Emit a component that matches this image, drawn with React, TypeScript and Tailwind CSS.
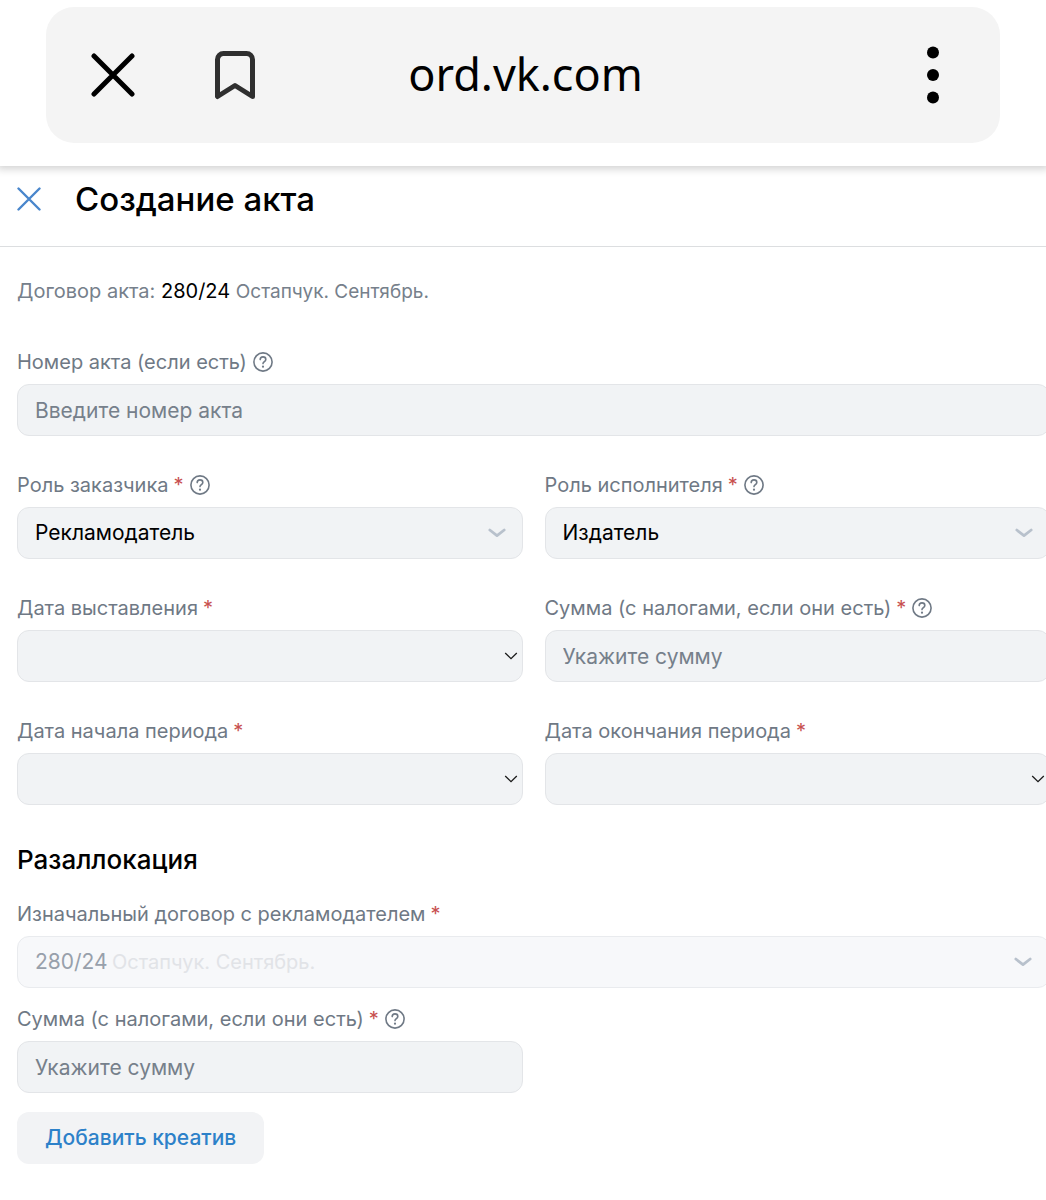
import type { ReactNode } from "react";

interface LabelProps {
    htmlFor: string;
    text: string;
    required?: boolean;
    help?: boolean;
}

const controlClass =
    "h-13 w-full rounded-xl border border-[#e3e5e8] bg-[#f1f3f5] px-[17px] text-[21px] text-black outline-none placeholder:text-[#76808b] placeholder:opacity-100";

function HelpIcon() {
    return (
        <svg width="20" height="20" viewBox="0 0 20 20" fill="none" stroke="currentColor" strokeWidth="1.6" strokeLinecap="round" strokeLinejoin="round">
            <circle cx="10" cy="10" r="9.1" />
            <path d="M7.2 7.6C7.2 5.9 8.4 4.9 10 4.9s2.8 1 2.8 2.5c0 2.1-2.8 2.2-2.8 4.2" />
            <circle cx="10" cy="14.7" r="1.1" fill="currentColor" stroke="none" />
        </svg>
    );
}

function Chevron() {
    return (
        <svg className="pointer-events-none" width="18" height="10" viewBox="0 0 18 10" fill="none" stroke="#b8c1cc" strokeWidth="2.8" strokeLinecap="round" strokeLinejoin="round">
            <path d="M1.8 2 9 7.6 16.2 2" />
        </svg>
    );
}

function ThinChevron() {
    return (
        <svg className="pointer-events-none" width="14" height="8" viewBox="0 0 14 8" fill="none" stroke="#1a1a1a" strokeWidth="1.3">
            <path d="M1.2 1 7 6.6 12.8 1" />
        </svg>
    );
}

function FieldLabel({ htmlFor, text, required, help }: LabelProps) {
    return (
        <div className="flex items-center gap-[6px] leading-6 text-[#6f7985]">
            <label htmlFor={htmlFor} className="whitespace-nowrap text-[20px]">
                {text}
                {required && <span className="ml-[5px] text-[#c8504f]">*</span>}
            </label>
            {help && (
                <button type="button" aria-label="Подсказка">
                    <HelpIcon />
                </button>
            )}
        </div>
    );
}

function Field({ children, ...label }: LabelProps & { children: ReactNode }) {
    return (
        <div className="flex min-w-0 flex-col gap-[10px]">
            <FieldLabel {...label} />
            {children}
        </div>
    );
}

function RoleSelect({ id, value }: { id: string; value: string }) {
    return (
        <div className="relative flex items-center">
            <select id={id} className={`${controlClass} appearance-none`}>
                <option>{value}</option>
            </select>
            <div className="pointer-events-none absolute right-[17px]">
                <Chevron />
            </div>
        </div>
    );
}

function DateSelect({ id }: { id: string }) {
    return (
        <div className="relative flex items-center">
            <select id={id} className={`${controlClass} appearance-none`}>
                <option></option>
            </select>
            <div className="pointer-events-none absolute right-[5px]">
                <ThinChevron />
            </div>
        </div>
    );
}

function BrowserBar() {
    return (
        <header className="relative bg-white px-[46px] pt-[7px] pb-[23px] shadow-[0_0_8px_3px_rgba(0,0,0,0.18)]">
            <div className="flex h-34 items-center rounded-[28px] bg-[#f4f4f4] px-[45px]">
                <button type="button" aria-label="Закрыть">
                    <svg width="44" height="44" viewBox="0 0 44 44" fill="none" stroke="#000" strokeWidth="5" strokeLinecap="round">
                        <path d="M3 3 41 41M41 3 3 41" />
                    </svg>
                </button>
                <button type="button" aria-label="Закладка" className="ml-[79px]">
                    <svg width="42" height="50" viewBox="0 0 42 50" fill="none" stroke="#2f2f2f" strokeWidth="5" strokeLinejoin="round">
                        <path d="M3.5 46.5V9.5a6 6 0 0 1 6-6h23a6 6 0 0 1 6 6v37L21 35.5Z" />
                    </svg>
                </button>
                <span className="flex-1 pb-1 text-center font-['Noto_Sans',sans-serif] text-[45px] leading-none text-black">ord.vk.com</span>
                <button type="button" aria-label="Меню" className="mr-[16px] ml-[132px]">
                    <svg width="12" height="58" viewBox="0 0 12 58">
                        <circle cx="6" cy="6.5" r="6" />
                        <circle cx="6" cy="29" r="6" />
                        <circle cx="6" cy="51.5" r="6" />
                    </svg>
                </button>
            </div>
        </header>
    );
}

export default function App() {
    return (
        <div className="min-h-screen overflow-hidden bg-white font-['Inter',sans-serif]">
            <BrowserBar />
            <div className="flex h-[81px] items-center gap-[34px] border-b border-[#dcdee0] px-[17px] pb-[15px]">
                <button type="button" aria-label="Закрыть форму">
                    <svg width="24" height="24" viewBox="0 0 24 24" fill="none" stroke="#4986cc" strokeWidth="2.4" strokeLinecap="round">
                        <path d="M1.5 1.5 22.5 22.5M22.5 1.5 1.5 22.5" />
                    </svg>
                </button>
                <h1 className="text-[33px] leading-10 font-medium text-black">Создание акта</h1>
            </div>

            <main className="-mr-1 pt-[30px] pl-[17px]">
                <p className="text-[20px] leading-7 text-[#76808b]">
                    Договор акта: <span className="text-black">280/24</span> <span className="text-[19px]">Остапчук. Сентябрь.</span>
                </p>

                <form className="mt-11">
                    <div className="grid grid-cols-2 gap-x-[22px] gap-y-[37px]">
                        <div className="col-span-2">
                            <Field htmlFor="act-number" text="Номер акта (если есть)" help>
                                <input id="act-number" className={controlClass} placeholder="Введите номер акта" />
                            </Field>
                        </div>
                        <Field htmlFor="customer-role" text="Роль заказчика" required help>
                            <RoleSelect id="customer-role" value="Рекламодатель" />
                        </Field>
                        <Field htmlFor="executor-role" text="Роль исполнителя" required help>
                            <RoleSelect id="executor-role" value="Издатель" />
                        </Field>
                        <Field htmlFor="issue-date" text="Дата выставления" required>
                            <DateSelect id="issue-date" />
                        </Field>
                        <Field htmlFor="amount" text="Сумма (с налогами, если они есть)" required help>
                            <input id="amount" className={controlClass} placeholder="Укажите сумму" />
                        </Field>
                        <Field htmlFor="period-start" text="Дата начала периода" required>
                            <DateSelect id="period-start" />
                        </Field>
                        <Field htmlFor="period-end" text="Дата окончания периода" required>
                            <DateSelect id="period-end" />
                        </Field>
                    </div>

                    <h2 className="mt-[39px] mb-[26px] text-[26px] leading-8 font-medium text-black">Разаллокация</h2>

                    <div className="flex flex-col gap-[19px]">
                        <Field htmlFor="contract" text="Изначальный договор с рекламодателем" required>
                            <div className="flex h-13 items-center gap-1 rounded-xl border border-[#e9ebee] bg-[#f7f8fa] px-[17px]">
                                <select id="contract" disabled className="appearance-none text-[21px] text-[#98a0ab] opacity-100">
                                    <option>280/24</option>
                                </select>
                                <span className="flex-1 text-[20px] text-[#e1e3e7]">Остапчук. Сентябрь.</span>
                                <Chevron />
                            </div>
                        </Field>
                        <div className="grid grid-cols-2 gap-x-[22px]">
                            <Field htmlFor="allocation-amount" text="Сумма (с налогами, если они есть)" required help>
                                <input id="allocation-amount" className={controlClass} placeholder="Укажите сумму" />
                            </Field>
                        </div>
                        <button type="button" className="h-13 self-start rounded-xl bg-[#f2f3f5] px-7 text-[21px] font-medium text-[#2d81c9]">
                            Добавить креатив
                        </button>
                    </div>
                </form>
            </main>
        </div>
    );
}
